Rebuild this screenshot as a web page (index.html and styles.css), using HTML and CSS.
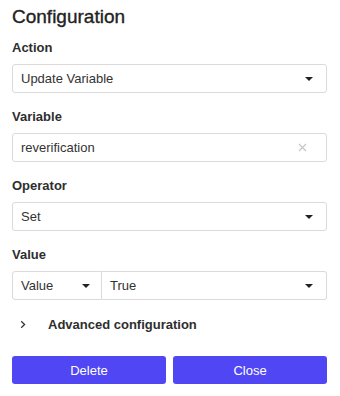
FILE: index.html
```html
<!DOCTYPE html>
<html>
<head>
<meta charset="utf-8">
<link rel="stylesheet" href="styles.css">
</head>
<body>
<div class="panel">
  <h1 class="title">Configuration</h1>
  <div class="field">
    <div class="label">Action</div>
    <div class="box">
      <span class="val">Update Variable</span>
      <span class="caret"></span>
    </div>
  </div>
  <div class="field">
    <div class="label">Variable</div>
    <div class="box">
      <span class="val">reverification</span>
      <svg class="clear" width="9" height="9" viewBox="0 0 9 9"><path d="M1 1L8 8M8 1L1 8" stroke="#c4c4c4" stroke-width="1.1" fill="none"/></svg>
    </div>
  </div>
  <div class="field">
    <div class="label">Operator</div>
    <div class="box">
      <span class="val">Set</span>
      <span class="caret"></span>
    </div>
  </div>
  <div class="field">
    <div class="label">Value</div>
    <div class="split">
      <div class="box left">
        <span class="val">Value</span>
        <span class="caret"></span>
      </div>
      <div class="box right">
        <span class="val">True</span>
        <span class="caret"></span>
      </div>
    </div>
  </div>
  <div class="advanced">
    <svg class="chev" width="6" height="9" viewBox="0 0 6 9"><path d="M1.2 1.2L4.6 4.5L1.2 7.8" stroke="#333" stroke-width="1.3" fill="none"/></svg>
    <span class="adv-text">Advanced configuration</span>
  </div>
  <div class="buttons">
    <button class="btn">Delete</button>
    <button class="btn">Close</button>
  </div>
</div>
</body>
</html>
```
FILE: styles.css
```css
* { box-sizing: border-box; }
body {
  margin: 0;
  background: #fff;
  font-family: "Liberation Sans", Arial, sans-serif;
  color: #222;
}
.panel {
  width: 340px;
  padding: 6px 13px 0 12px;
}
.title {
  margin: 0 0 11px 0;
  font-size: 19px;
  line-height: 22px;
  font-weight: 400;
  color: #222;
  -webkit-text-stroke: 0.35px #222;
}
.field {
  margin-bottom: 15px;
}
.label {
  font-size: 13px;
  line-height: 17px;
  font-weight: 700;
  color: #2e2e2e;
  margin-bottom: 8px;
}
.box {
  height: 29px;
  border: 1px solid #dadada;
  border-radius: 3px;
  display: flex;
  align-items: center;
  justify-content: space-between;
  padding: 0 13px 0 8px;
  font-size: 13px;
  color: #333;
  background: #fff;
}
.caret {
  width: 0;
  height: 0;
  border-left: 4px solid transparent;
  border-right: 4px solid transparent;
  border-top: 4px solid #222;
  margin-top: 1px;
}
.clear { margin-right: 6px; }
.split {
  display: flex;
}
.box.left {
  width: 90px;
  flex: none;
  border-radius: 3px 0 0 3px;
  padding-right: 11px;
}
.box.right {
  flex: 1;
  border-left: none;
  border-radius: 0 3px 3px 0;
}
.advanced {
  display: flex;
  align-items: center;
  height: 20px;
  margin-top: -1px;
  padding-left: 8px;
}
.chev { margin-right: 22px; }
.adv-text {
  font-size: 13px;
  font-weight: 700;
  color: #2e2e2e;
}
.buttons {
  display: flex;
  gap: 7px;
  margin-top: 22px;
}
.btn {
  flex: 1;
  height: 28px;
  border: none;
  border-radius: 3px;
  background: #5046f3;
  color: #fff;
  font-family: "Liberation Sans", Arial, sans-serif;
  font-size: 13px;
}
```
